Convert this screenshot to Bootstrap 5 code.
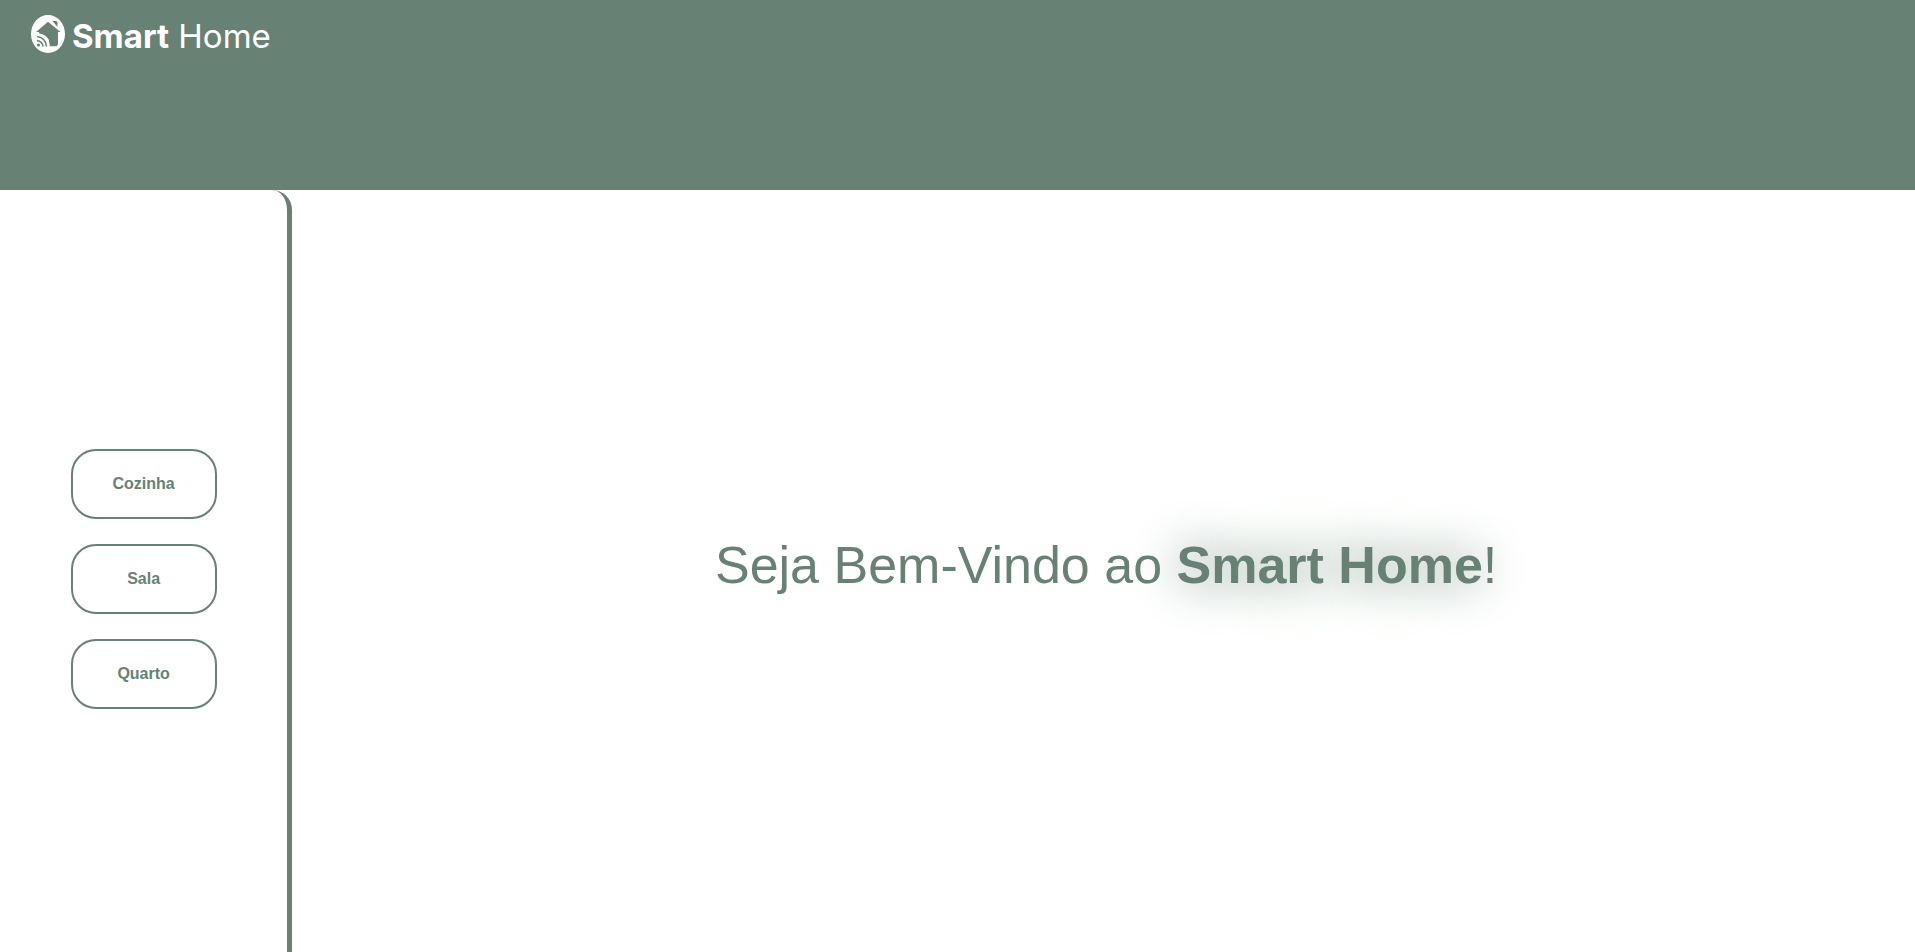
<!DOCTYPE html>
<html lang="pt-BR">
<head>
<meta charset="utf-8">
<meta name="viewport" content="width=device-width, initial-scale=1">
<title>Smart Home</title>
<link href="https://cdn.jsdelivr.net/npm/bootstrap@5.3.0/dist/css/bootstrap.min.css" rel="stylesheet">
<style>
:root { --sage: #678175; }
body { font-family: "Liberation Sans", Arial, sans-serif; color: var(--sage); background: #fff; }
.top-bar { height: 20vh; background: var(--sage); padding: 12px 30px; }
.brand { gap: 6px; color: #fff; font: 400 33px/48px Inter, sans-serif; }
.brand:hover { color: #fff; }
.brand strong { font-weight: 700; }
.side-menu { box-sizing: content-box; width: 15%; border-right: 5px solid var(--sage); border-top-right-radius: 20px; }
.side-menu ul { gap: 25px; padding-top: 16px; }
.room-btn { width: 146px; height: 70px; border: 2px solid var(--sage); border-radius: 25px; color: var(--sage); background: #fff; font-size: 16px; font-weight: 700; }
.room-btn:hover { color: #fff; background: var(--sage); border-color: var(--sage); }
.welcome { padding: 0 0 12px 5px; }
.welcome h1 { font-size: 52px; line-height: 60px; font-weight: 400; }
.welcome strong { font-weight: 700; text-shadow: 0 0 50px var(--sage); }
</style>
</head>
<body class="d-flex flex-column min-vh-100">
<header class="top-bar flex-shrink-0">
  <a class="brand d-inline-flex align-items-start text-decoration-none" href="#">
    <svg width="36" height="42" viewBox="0 0 36 42" aria-hidden="true">
      <ellipse cx="18" cy="22" rx="17" ry="19" fill="#fff"/>
      <path d="M6 20 18 9.700 30.500 20H28V32Q28 34 26 34.300H19V28Q15 21.500 9 21.500V20Z" fill="#678175"/>
      <path d="M22.500 9H26Q27.500 9 27.500 10.500V15Z" fill="#678175"/>
      <path d="M20.500 9.500 30 17.500" stroke="#fff" stroke-width="1"/>
      <g fill="none" stroke="#678175" stroke-width="1.600">
        <path d="M7 28.500Q12.500 29.500 13 34.500M7 24.500Q16 26 16.500 34.500"/>
        <path d="M7 22Q18.500 23 19 34.500" stroke="#fff"/>
      </g>
      <circle cx="8.500" cy="33" r="1.600" fill="#678175"/>
    </svg>
    <span><strong>Smart</strong> Home</span>
  </a>
</header>
<div class="d-flex flex-grow-1">
  <nav class="side-menu flex-shrink-0 d-flex align-items-center justify-content-center" aria-label="Cômodos">
    <ul class="list-unstyled d-flex flex-column mb-0">
      <li><button type="button" class="btn room-btn d-block">Cozinha</button></li>
      <li><button type="button" class="btn room-btn d-block">Sala</button></li>
      <li><button type="button" class="btn room-btn d-block">Quarto</button></li>
    </ul>
  </nav>
  <main class="welcome flex-grow-1 d-flex align-items-center justify-content-center text-center">
    <h1 class="mb-0">Seja Bem-Vindo ao <strong>Smart Home</strong>!</h1>
  </main>
</div>
<script src="https://cdn.jsdelivr.net/npm/bootstrap@5.3.0/dist/js/bootstrap.bundle.min.js"></script>
</body>
</html>
